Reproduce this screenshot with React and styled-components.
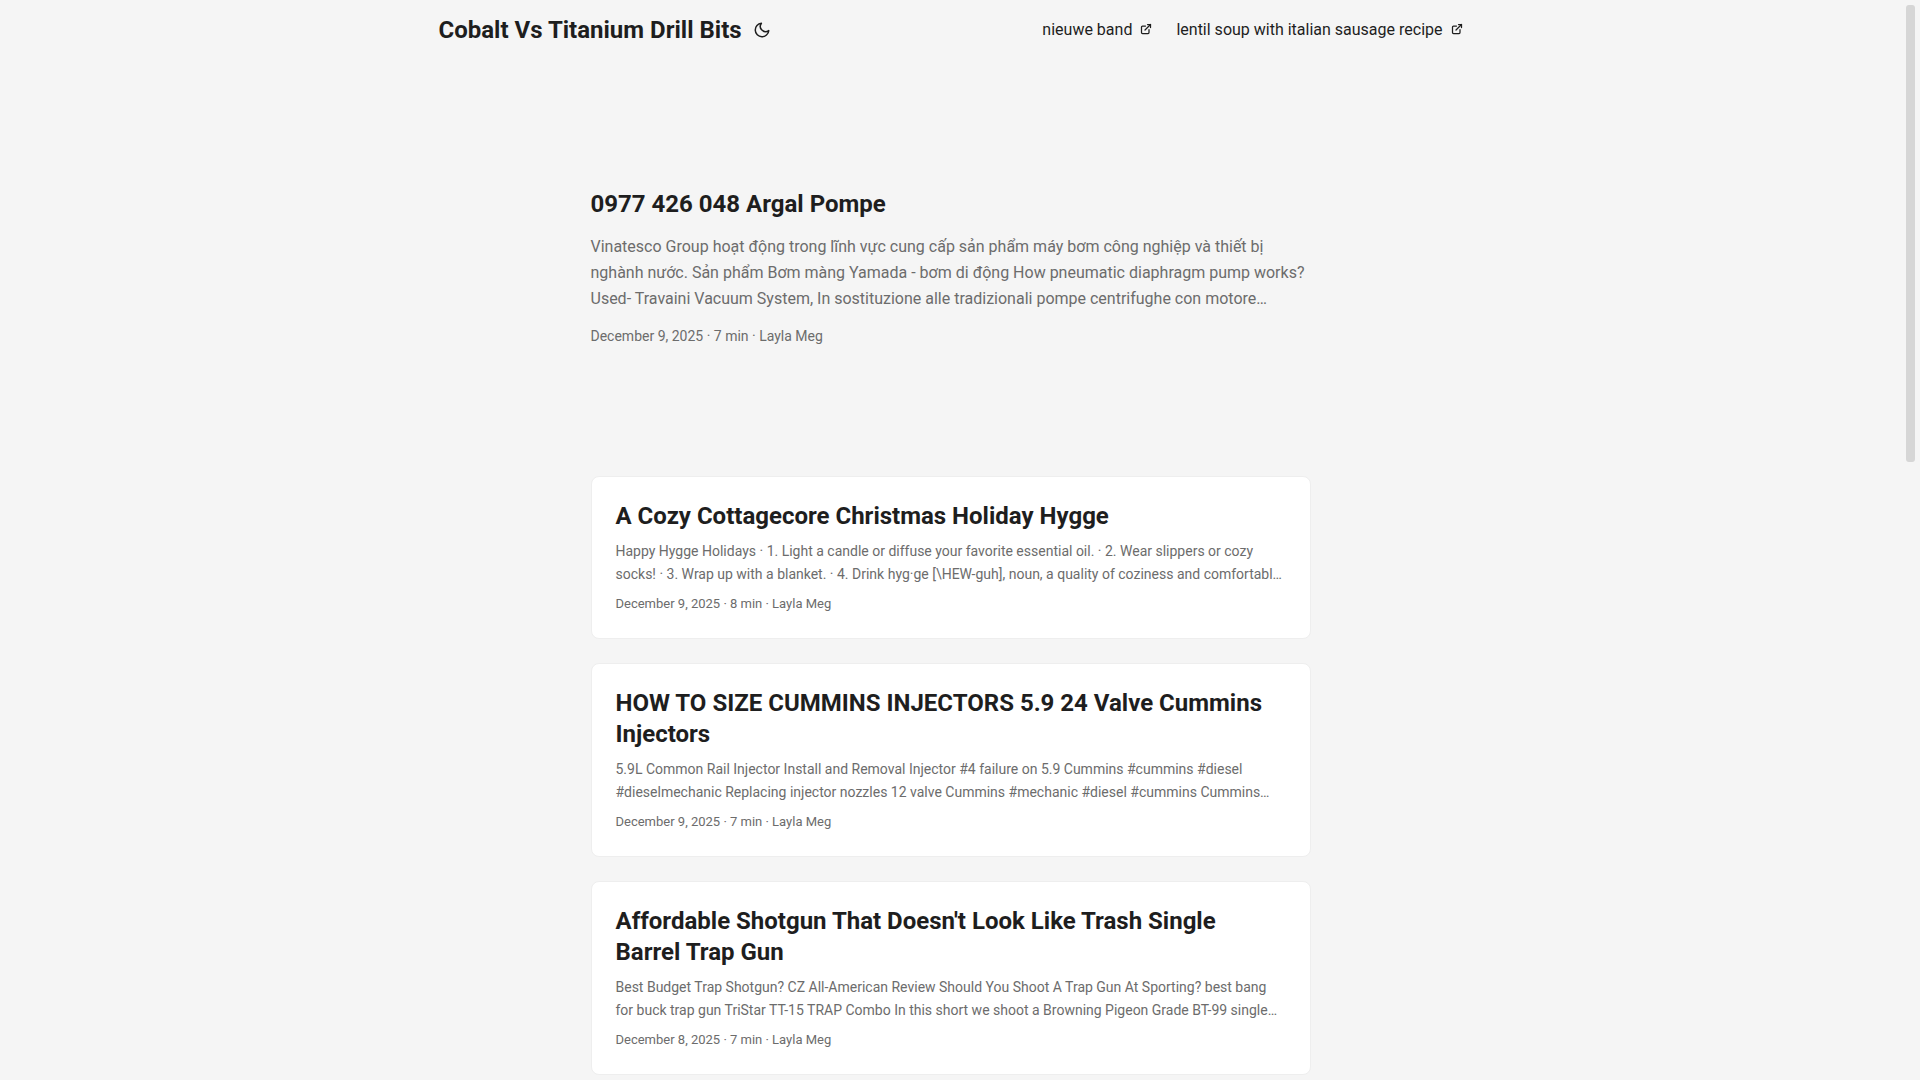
import styled, { createGlobalStyle } from 'styled-components'

const GlobalStyle = createGlobalStyle`
    :root {
        --gap: 24px;
        --theme: #f5f5f5;
        --entry: #fff;
        --primary: #1e1e1e;
        --secondary: #6c6c6c;
        --border: #eee;
        --thumb: #d6d6d6;
    }

    * {
        box-sizing: border-box;
        margin: 0;
        padding: 0;
    }

    body {
        font-family: Roboto, "Noto Sans", sans-serif;
        font-size: 16px;
        line-height: 26px;
        color: var(--primary);
        background: var(--theme);
    }

    a {
        color: inherit;
        text-decoration: none;
    }
`;

const Page = styled.div`
    display: flex;
    height: 100vh;
`;

const Scroller = styled.div`
    flex: 1;
    overflow-y: auto;
    scrollbar-width: none;
`;

const Rail = styled.div`
    flex: 0 0 19px;
    padding: 5px;
`;

const Thumb = styled.div`
    height: 457px;
    border-radius: 3px;
    background: var(--thumb);
`;

const Nav = styled.nav`
    display: flex;
    flex-wrap: wrap;
    justify-content: space-between;
    max-width: 1072px;
    margin: 0 auto;
    padding: 0 var(--gap);
    line-height: 60px;
`;

const Logo = styled.div`
    display: flex;
    align-items: center;

    &>a {
        font-size: 24px;
        font-weight: 700;
    }
`;

const ThemeToggle = styled.button`
    display: flex;
    margin: 0 4px;
    padding: 0 4px;
    border: 0;
    background: none;
    color: inherit;
    cursor: pointer;
`;

const Menu = styled.ul`
    display: flex;
    gap: var(--gap);
    list-style: none;

    a {
        display: flex;
        align-items: baseline;
        gap: 8px;
    }
`;

const Main = styled.main`
    max-width: 768px;
    margin: 0 auto;
    padding: var(--gap);
`;

const EntryTitle = styled.h2`
    font-size: 24px;
    font-weight: 700;
    line-height: 31px;
`;

const FirstEntry = styled.article`
    display: flex;
    flex-direction: column;
    justify-content: center;
    min-height: 320px;
    margin: var(--gap) 0 48px;
    color: var(--secondary);

    &>h2 {
        color: var(--primary);
    }

    &>p {
        margin: 14px 0 13px;
    }

    &>footer {
        font-size: 14px;
        line-height: 23px;
    }
`;

const PostEntry = styled.article`
    margin-bottom: var(--gap);
    padding: var(--gap);
    border: 1px solid var(--border);
    border-radius: 8px;
    background: var(--entry);
    color: var(--secondary);

    &>h2 {
        color: var(--primary);
    }

    &>p {
        margin: 8px 0 7px;
        font-size: 14px;
        line-height: 23px;
    }

    &>footer {
        font-size: 13px;
        line-height: 21px;
    }
`;

const links = ['nieuwe band', 'lentil soup with italian sausage recipe']

const featured = {
    title: '0977 426 048 Argal Pompe',
    summary: 'Vinatesco Group hoạt động trong lĩnh vực cung cấp sản phẩm máy bơm công nghiệp và thiết bị nghành nước. Sản phẩm Bơm màng Yamada - bơm di động How pneumatic diaphragm pump works? Used- Travaini Vacuum System, In sostituzione alle tradizionali pompe centrifughe con motore…',
    date: 'December 9, 2025',
    minutes: 7,
}

const posts = [
    {
        title: 'A Cozy Cottagecore Christmas Holiday Hygge',
        summary: 'Happy Hygge Holidays · 1. Light a candle or diffuse your favorite essential oil. · 2. Wear slippers or cozy socks! · 3. Wrap up with a blanket. · 4. Drink hyg·ge [\\HEW-guh], noun, a quality of coziness and comfortabl…',
        date: 'December 9, 2025',
        minutes: 8,
    },
    {
        title: 'HOW TO SIZE CUMMINS INJECTORS 5.9 24 Valve Cummins Injectors',
        summary: '5.9L Common Rail Injector Install and Removal Injector #4 failure on 5.9 Cummins #cummins #diesel #dieselmechanic Replacing injector nozzles 12 valve Cummins #mechanic #diesel #cummins Cummins…',
        date: 'December 9, 2025',
        minutes: 7,
    },
    {
        title: "Affordable Shotgun That Doesn't Look Like Trash Single Barrel Trap Gun",
        summary: 'Best Budget Trap Shotgun? CZ All-American Review Should You Shoot A Trap Gun At Sporting? best bang for buck trap gun TriStar TT-15 TRAP Combo In this short we shoot a Browning Pigeon Grade BT-99 single…',
        date: 'December 8, 2025',
        minutes: 7,
    },
]

const MoonIcon = () => (
    <svg width="24" height="18" viewBox="0 0 24 24" fill="none" stroke="currentColor" strokeWidth="2" strokeLinecap="round" strokeLinejoin="round">
        <path d="M21 12.79A9 9 0 1 1 11.21 3 7 7 0 0 0 21 12.79z" />
    </svg>
)

const ExternalIcon = () => (
    <svg width="12" height="12" viewBox="0 0 24 24" fill="none" stroke="currentColor" strokeWidth="2.5" strokeLinecap="round" strokeLinejoin="round" shapeRendering="geometricPrecision">
        <path d="M18 13v6a2 2 0 01-2 2H5a2 2 0 01-2-2V8a2 2 0 012-2h6" />
        <path d="M15 3h6v6" />
        <path d="M10 14L21 3" />
    </svg>
)

// shared by the featured entry and the cards
const Entry = ({ as: Wrapper, post }) => (
    <Wrapper>
        <EntryTitle><a href="#">{post.title}</a></EntryTitle>
        <p>{post.summary}</p>
        <footer>{`${post.date} · ${post.minutes} min · Layla Meg`}</footer>
    </Wrapper>
)

const App = () => {
    return (
        <Page>
            <GlobalStyle />
            <Scroller>
                <header>
                    <Nav>
                        <Logo>
                            <a href="#">Cobalt Vs Titanium Drill Bits</a>
                            <ThemeToggle type="button" aria-label="Toggle theme"><MoonIcon /></ThemeToggle>
                        </Logo>
                        <Menu>
                            {links.map(name => (
                                <li key={name}><a href="#"><span>{name}</span><ExternalIcon /></a></li>
                            ))}
                        </Menu>
                    </Nav>
                </header>
                <Main>
                    <Entry as={FirstEntry} post={featured} />
                    {posts.map(post => <Entry key={post.title} as={PostEntry} post={post} />)}
                </Main>
            </Scroller>
            <Rail aria-hidden="true"><Thumb /></Rail>
        </Page>
    )
}

export default App
